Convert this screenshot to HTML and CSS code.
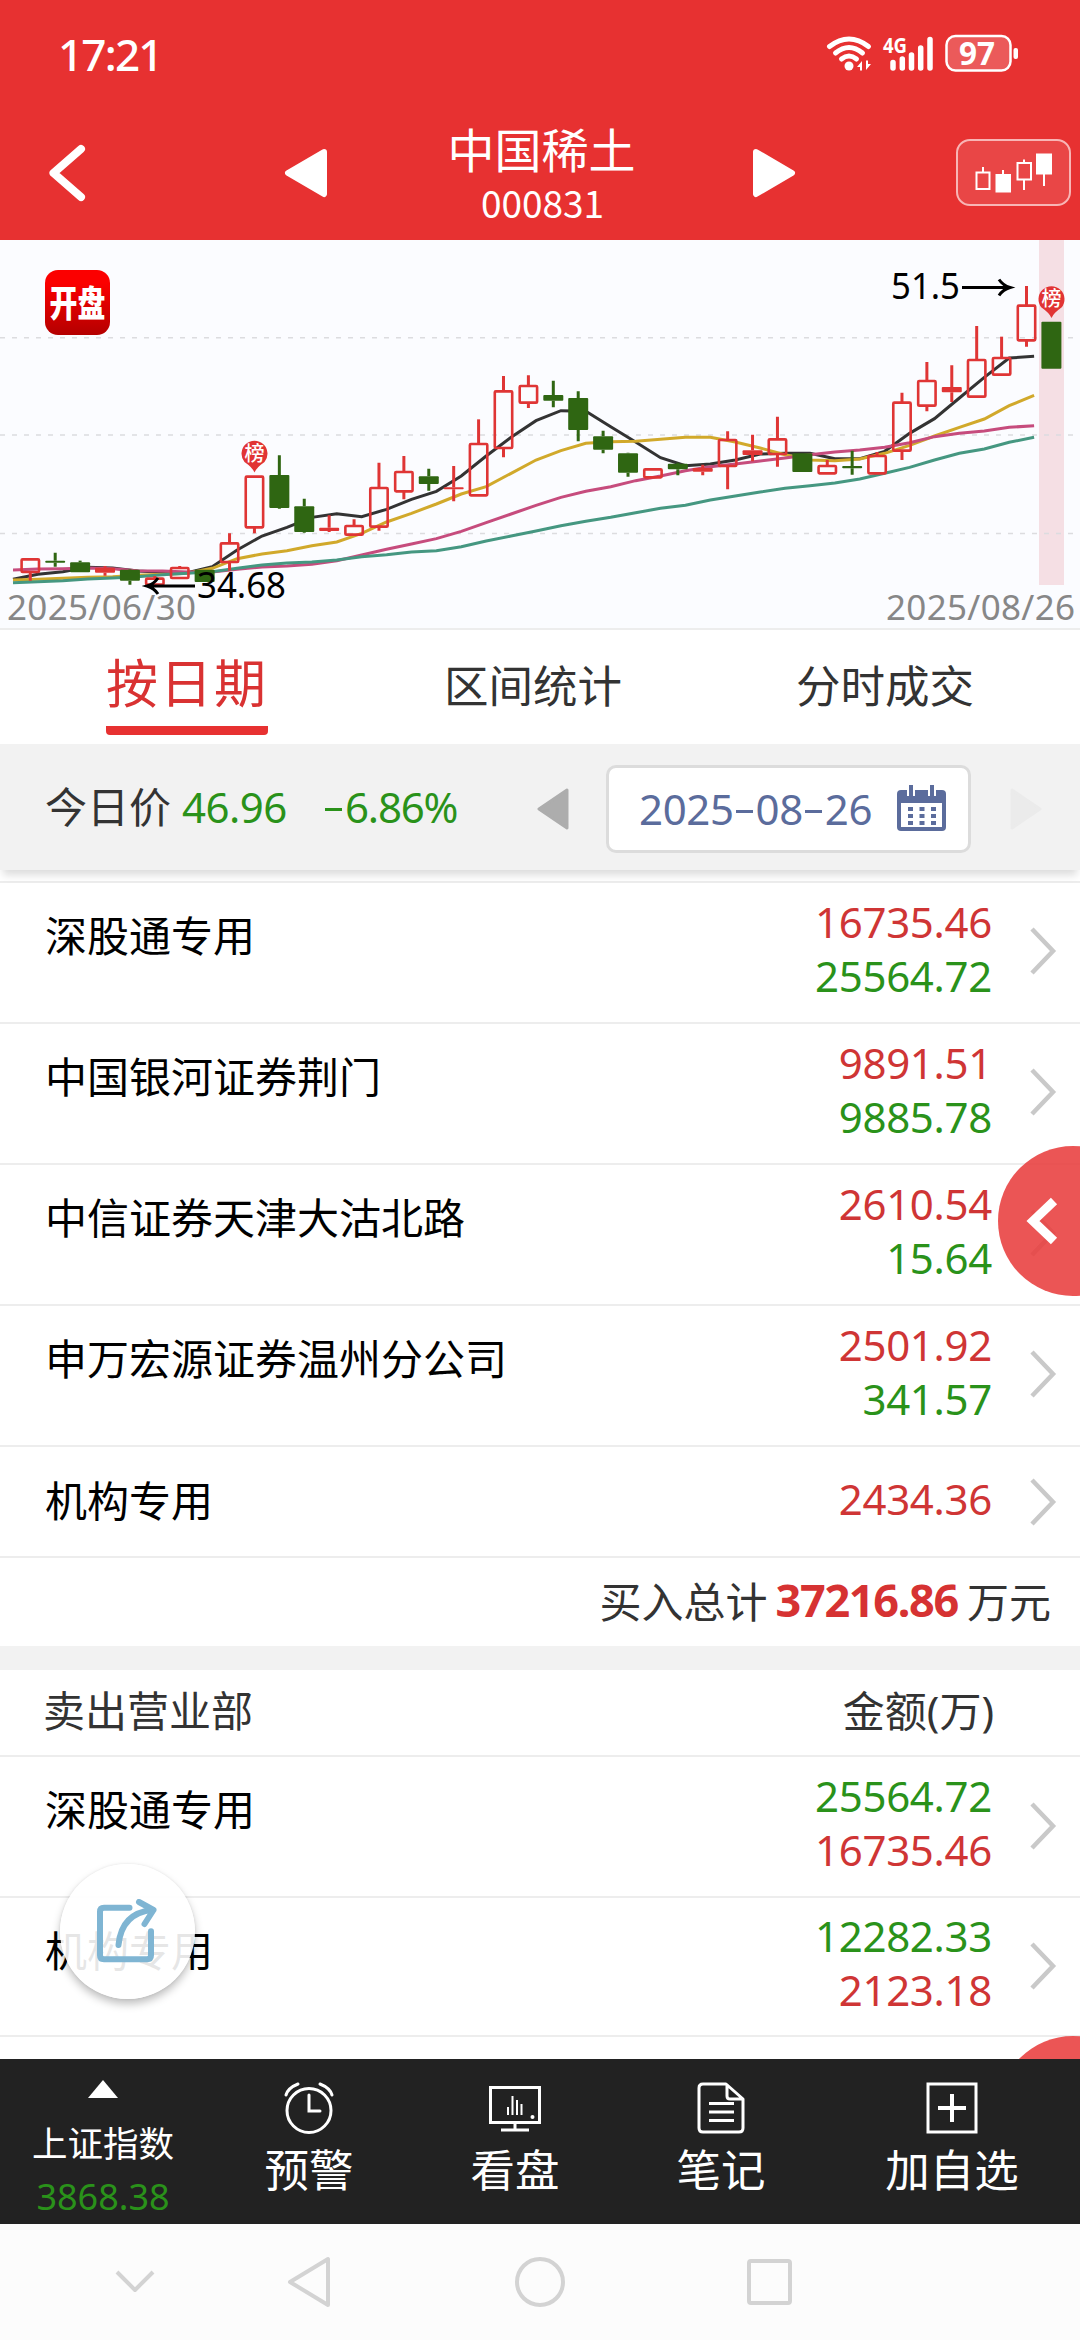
FILE: index.html
```html
<!DOCTYPE html>
<html lang="zh-CN">
<head>
    <meta charset="UTF-8">
    <meta name="viewport" content="width=device-width, initial-scale=1.0">
    <title>中国稀土 000831</title>
    <link rel="stylesheet" href="styles.css">
</head>
<body>
    <div class="app">
        <div class="status-bar">
            <span class="clock">17:21</span>
            <svg class="status-icons" width="200" height="68" viewBox="820 20 200 68">
                <g fill="none" stroke="#fff" stroke-width="5" stroke-linecap="round">
                    <path d="M829.5 46.500Q849 31.500 868.500 46.500"/>
                    <path d="M835.500 53Q849 42 862.500 53"/>
                    <path d="M841.500 59Q849 53 856.500 59"/>
                </g>
                <circle cx="849" cy="66" r="4.500" fill="#fff"/>
                <path d="M857 67l5-6v9.500h-2v-3.500zM871 64l-5 6v-9.500h2v3.500z" fill="#fff"/>
                <text class="net" x="883" y="53" textLength="24" lengthAdjust="spacingAndGlyphs">4G</text>
                <g stroke="#fff" stroke-width="5.500" stroke-linecap="round">
                    <path d="M893 62.500v5.500M902.300 59v9M911.500 55v13M920.700 48v20M930 39.500v28.500"/>
                </g>
                <rect x="946.500" y="36" width="64" height="34.500" rx="9" fill="rgba(255,255,255,0.2)" stroke="#fff" stroke-width="2.500"/>
                <rect x="1013.500" y="48" width="4.500" height="11" rx="2" fill="#fff"/>
                <text class="battery" x="959" y="64.500" textLength="36" lengthAdjust="spacingAndGlyphs">97</text>
            </svg>
        </div>

        <div class="header">
            <svg class="back" width="46" height="66" viewBox="0 0 46 66">
                <path d="M38 9L10.500 33L38 57" fill="none" stroke="#fff" stroke-width="8" stroke-linecap="round" stroke-linejoin="round"/>
            </svg>
            <svg class="prev" width="44" height="50" viewBox="0 0 44 50">
                <path d="M40 4L4 25L40 46z" fill="#fff" stroke="#fff" stroke-width="6" stroke-linejoin="round"/>
            </svg>
            <div class="title">
                <div class="stock-name">中国稀土</div>
                <div class="stock-code">000831</div>
            </div>
            <svg class="next" width="44" height="50" viewBox="0 0 44 50">
                <path d="M4 4L40 25L4 46z" fill="#fff" stroke="#fff" stroke-width="6" stroke-linejoin="round"/>
            </svg>
            <div class="kline-btn">
                <svg width="80" height="42" viewBox="973 151 80 42">
                    <g fill="none" stroke="#fff" stroke-width="2">
                        <path d="M975.500 171.500h13v16.500h-13zM982 166v5M1002 169v5M1016.500 162h13.500v16.500h-13.500zM1023 158.500v3.500M1023 179v10M1043 173v12"/>
                    </g>
                    <path d="M994.500 173h15.500v18.500h-15.500zM1035 152.500h16v21h-16z" fill="#fff"/>
                </svg>
            </div>
        </div>

        <div class="chart">
            <svg id="kline" width="1080" height="389" viewBox="0 240 1080 389">
                <defs>
                    <linearGradient id="logoBg" x1="0" y1="0" x2="0" y2="1">
                        <stop offset="0.200" stop-color="#fb0000"/>
                        <stop offset="1" stop-color="#b40000"/>
                    </linearGradient>
                </defs>
                <rect x="1039" y="240" width="25" height="345" fill="#f5dfe4"/>
                <path d="M0 337.700h1080M0 435h1080M0 533.500h1080" stroke="#dcdcdf" stroke-width="1.500" stroke-dasharray="5 7"/>
                <g id="averages"></g>
                <g id="candles"></g>
                <g id="pins"></g>
                <rect x="45" y="270" width="65" height="65" rx="13" fill="url(#logoBg)"/>
                <text class="logo-text" transform="translate(77.500 317) scale(0.930 1.200)" text-anchor="middle">开盘</text>
                <path d="M147 586h48M158 578q-4 6-11 8q7 2 11 8" class="arrow"/>
                <text class="extreme" x="197" y="598" textLength="89" lengthAdjust="spacingAndGlyphs">34.68</text>
                <path d="M962 287.500h48M999 279.500q4 6 11 8q-7 2-11 8" class="arrow"/>
                <text class="extreme" x="891" y="299" textLength="69" lengthAdjust="spacingAndGlyphs">51.5</text>
                <text class="day" x="7" y="620" textLength="189">2025/06/30</text>
                <text class="day" x="886" y="620" textLength="189">2025/08/26</text>
            </svg>
        </div>

        <div class="tabs">
            <div class="tab active">按日期</div>
            <div class="tab">区间统计</div>
            <div class="tab">分时成交</div>
        </div>

        <div class="toolbar">
            <span class="label">今日价</span>
            <span class="price">46.96</span>
            <span class="change"><i class="minus"></i>6.86%</span>
            <svg class="day-prev" width="32" height="42" viewBox="0 0 32 42">
                <path d="M30 2L2 21L30 40z" fill="#adadad" stroke="#adadad" stroke-width="3" stroke-linejoin="round"/>
            </svg>
            <div class="date-box">
                <span>2025<i class="dash"></i>08<i class="dash"></i>26</span>
                <svg width="49" height="46" viewBox="0 0 49 46">
                    <path d="M4 5h41q4 0 4 4v33q0 4-4 4h-41q-4 0-4-4v-33q0-4 4-4z" fill="#5b6c9c"/>
                    <path d="M4 18h41v24h-41z" fill="#fff"/>
                    <path d="M14 0v11M35 0v11" stroke="#fff" stroke-width="8"/>
                    <path d="M14 0v11M35 0v11" stroke="#5b6c9c" stroke-width="4"/>
                    <path d="M11 24h28M11 31h28M11 38h28" stroke="#5b6c9c" stroke-width="4" stroke-dasharray="5 6.500"/>
                </svg>
            </div>
            <svg class="day-next" width="32" height="42" viewBox="0 0 32 42">
                <path d="M2 2L30 21L2 40z" fill="#ebebeb" stroke="#ebebeb" stroke-width="3" stroke-linejoin="round"/>
            </svg>
        </div>

        <div class="content">
            <div class="list" id="buyList"></div>
            <div class="total">买入总计<b>37216.86</b>万元</div>
            <div class="list-head"><span>卖出营业部</span><span>金额(万)</span></div>
            <div class="list" id="sellList"></div>

            <div class="drawer-handle">
                <svg width="34" height="50" viewBox="0 0 34 50"><path d="M29 5L8 25L29 45" fill="none" stroke="#fff" stroke-width="9"/></svg>
            </div>
            <div class="drawer-handle lower"></div>

            <div class="share">
                <svg width="66" height="66" viewBox="96 1900 66 66">
                    <g fill="none" stroke="#7fb5d3" stroke-width="6" stroke-linecap="round" stroke-linejoin="round">
                        <path d="M130.500 1908.700h-25.500q-4 0-4 4v43.500q0 4 4 4h43q4 0 4-4v-24"/>
                        <path d="M119.500 1946q3-32 34-35"/>
                        <path d="M140 1903l14.500 8l-9 14"/>
                    </g>
                </svg>
            </div>
        </div>

        <div class="tab-bar">
            <div class="index">
                <i class="up"></i>
                <span class="index-name">上证指数</span>
                <span class="index-value">3868.38</span>
            </div>
            <div class="action">
                <svg width="52" height="52" viewBox="0 0 52 52" fill="none" stroke="#fff" stroke-width="3" stroke-linecap="round">
                    <circle cx="26" cy="28.500" r="22"/>
                    <path d="M26 13v16h11M3 13q2-7 12-11M49 13q-2-7-12-11"/>
                </svg>
                <span>预警</span>
            </div>
            <div class="action">
                <svg width="52" height="52" viewBox="0 0 52 52" fill="none" stroke="#fff">
                    <path d="M1.500 5.500h49v35h-49z" stroke-width="3"/>
                    <path d="M26 41v6M12 48h28" stroke-width="3"/>
                    <path d="M19 25v8M23.500 14v19M28 18v15M32.500 22v11" stroke-width="2"/>
                    <circle cx="43.500" cy="35" r="2" fill="#fff" stroke="none"/>
                </svg>
                <span>看盘</span>
            </div>
            <div class="action">
                <svg width="52" height="52" viewBox="0 0 52 52" fill="none" stroke="#fff" stroke-width="3" stroke-linejoin="round">
                    <path d="M8 2h23l17 15v29q0 4-4 4h-36q-4 0-4-4v-40q0-4 4-4zM32 2v12q0 3 3 3h13M14 21.500h25M14 30h25M14 38.500h25"/>
                </svg>
                <span>笔记</span>
            </div>
            <div class="action wide">
                <svg width="52" height="52" viewBox="0 0 52 52" fill="none" stroke="#fff">
                    <path d="M2 2h48v48h-48z" stroke-width="3"/>
                    <path d="M26 12v28M12 26h28" stroke-width="4"/>
                </svg>
                <span>加自选</span>
            </div>
        </div>

        <div class="system-nav">
            <svg width="42" height="26" viewBox="0 0 42 26"><path d="M3 3L21 21L39 3"/></svg>
            <svg width="46" height="54" viewBox="0 0 46 54"><path d="M42 4V50L4 27z"/></svg>
            <svg width="52" height="52" viewBox="0 0 52 52"><circle cx="26" cy="26" r="23"/></svg>
            <svg width="48" height="50" viewBox="0 0 48 50"><rect x="4" y="4" width="41" height="42" rx="2"/></svg>
        </div>
    </div>

    <script>
        const SVG_NS = 'http://www.w3.org/2000/svg';
        const STEP = 24.905;

        // [type, high, top, bottom, low], in thirds of a pixel. r = hollow up, f = filled up, g = down
        const candles = [
            ['r', 955, 958, 996, 1022], ['g', 938, 962, 968, 980], ['g', 962, 967, 997, 997],
            ['f', 978, 983, 998, 1007], ['g', 988, 989, 1022, 1034], ['r', 1008, 1016, 1034, 1036],
            ['r', 978, 984, 1014, 1014], ['g', 989, 989, 1026, 1026], ['r', 880, 910, 966, 992],
            ['r', 710, 710, 862, 880], ['g', 646, 705, 804, 806], ['g', 776, 799, 876, 878],
            ['f', 826, 863, 873, 876], ['r', 838, 858, 884, 888], ['r', 668, 744, 860, 872],
            ['r', 648, 696, 754, 778], ['g', 686, 709, 732, 752], ['f', 678, 742, 748, 784],
            ['r', 538, 612, 766, 766], ['r', 408, 454, 624, 652], ['r', 406, 438, 488, 504],
            ['g', 422, 465, 482, 502], ['g', 454, 474, 570, 604], ['g', 572, 589, 629, 640],
            ['g', 638, 640, 698, 710], ['r', 684, 688, 712, 712], ['g', 668, 671, 688, 706],
            ['f', 674, 684, 695, 706], ['r', 574, 600, 678, 748], ['f', 584, 631, 645, 664],
            ['r', 530, 598, 642, 680], ['g', 640, 640, 696, 696], ['r', 660, 678, 700, 700],
            ['g', 632, 678, 685, 704], ['r', 636, 648, 700, 700], ['r', 458, 488, 632, 660],
            ['r', 366, 423, 497, 514], ['f', 376, 441, 457, 486], ['r', 258, 360, 470, 474],
            ['r', 290, 354, 404, 404], ['r', 138, 197, 301, 320], ['g', 245, 245, 386, 386]
        ];

        const averages = {
            '#333333': [1018, 1003, 995, 982, 984, 993, 997, 998, 980, 930, 888, 862, 832, 821, 830, 808, 778, 754, 708, 648, 592, 542, 512, 514, 560, 606, 653, 677, 672, 660, 642, 640, 640, 656, 656, 634, 580, 536, 474, 412, 354, 349],
            '#d1a92b': [1020, 1018, 1015, 1012, 1010, 1006, 1003, 1000, 985, 956, 942, 932, 917, 906, 880, 846, 820, 792, 762, 740, 700, 660, 632, 610, 605, 604, 598, 592, 592, 606, 624, 644, 660, 662, 657, 640, 616, 588, 562, 537, 497, 466],
            '#c64c7d': [990, 987, 986, 984, 986, 992, 993, 996, 996, 988, 981, 978, 973, 962, 945, 928, 912, 896, 874, 848, 822, 796, 772, 754, 740, 722, 708, 692, 680, 672, 663, 654, 644, 636, 630, 622, 608, 590, 580, 573, 562, 557],
            '#459781': [1028, 1025, 1022, 1017, 1014, 1010, 1004, 1000, 995, 985, 975, 969, 966, 960, 950, 944, 936, 932, 920, 903, 888, 873, 857, 844, 832, 818, 805, 796, 780, 768, 756, 745, 737, 729, 717, 700, 682, 660, 640, 627, 607, 592]
        };

        const buys = [
            ['深股通专用', '16735.46', '25564.72'],
            ['中国银河证券荆门', '9891.51', '9885.78'],
            ['中信证券天津大沽北路', '2610.54', '15.64'],
            ['申万宏源证券温州分公司', '2501.92', '341.57'],
            ['机构专用', '2434.36']
        ];
        const sells = [
            ['深股通专用', '25564.72', '16735.46'],
            ['机构专用', '12282.33', '2123.18']
        ];

        const toY = v => 240 + v / 3;

        function add(parent, tag, attrs) {
            const el = document.createElementNS(SVG_NS, tag);
            for (const key in attrs) el.setAttribute(key, attrs[key]);
            document.getElementById(parent).appendChild(el);
            return el;
        }

        for (const color in averages) {
            const points = averages[color].map((v, i) => `${13 + i * STEP},${toY(v)}`).join(' ');
            add('averages', 'polyline', { points, fill: 'none', stroke: color, 'stroke-width': 3 });
        }

        candles.forEach(([type, high, top, bottom, low], i) => {
            const x = 30.3 + i * STEP;
            const color = type === 'g' ? '#2f6612' : '#df3535';
            const hollow = type === 'r';
            add('candles', 'path', {
                d: `M${x} ${toY(high)}V${toY(top)}M${x} ${toY(bottom)}V${toY(low)}`,
                stroke: color, 'stroke-width': 3
            });
            add('candles', 'rect', {
                x: x - (hollow ? 8.7 : 10), y: toY(top),
                width: hollow ? 17.4 : 20, height: (bottom - top) / 3,
                rx: 1, fill: hollow ? 'none' : color,
                stroke: hollow ? color : 'none', 'stroke-width': 2.6
            });
        });

        [[254.5, 453.5], [1051.5, 299]].forEach(([x, y]) => {
            add('pins', 'path', {
                d: `M${x - 10} ${y + 8.500}A13 13 0 1 1 ${x + 10} ${y + 8.500}Q${x + 2} ${y + 14} ${x} ${y + 19}Q${x - 2} ${y + 14} ${x - 10} ${y + 8.500}z`,
                fill: '#e13434'
            });
            add('pins', 'text', { x, y: y + 7, 'text-anchor': 'middle', class: 'pin-text' }).textContent = '榜';
        });

        function renderList(id, rows, colors) {
            document.getElementById(id).innerHTML = rows.map(([name, ...amounts]) => `
                <div class="row">
                    <span class="name">${name}</span>
                    <span class="amounts">${amounts.map((a, i) => `<span class="${colors[i]}">${a}</span>`).join('')}</span>
                    <svg class="more" width="28" height="48" viewBox="0 0 28 48"><path d="M3 2L24 24L3 46" fill="none" stroke="#c9c9c9" stroke-width="4.500"/></svg>
                </div>`).join('');
        }

        renderList('buyList', buys, ['red', 'green']);
        renderList('sellList', sells, ['green', 'red']);
    </script>
</body>
</html>
```
FILE: styles.css
```css
:root {
    --brand: #e73131;
    --red: #cf3535;
    --green: #2a921a;
    --text: #333;
    --line: #ededed;
    --gray-bg: #f2f2f2;
}

* {
    margin: 0;
    padding: 0;
    box-sizing: border-box;
}

body {
    width: 1080px;
    font-family: "Noto Sans", "Noto Sans CJK SC", sans-serif;
    color: var(--text);
    background: #fff;
}

svg {
    display: block;
    flex: none;
}

.app {
    display: flex;
    flex-direction: column;
    height: 2340px;
    overflow: hidden;
}

/* status bar */
.status-bar {
    display: flex;
    justify-content: space-between;
    align-items: center;
    height: 108px;
    padding: 0 60px 0 58px;
    background: var(--brand);
    color: #fff;
}

.clock {
    font-size: 44px;
    font-weight: 500;
    letter-spacing: -1.800px;
    line-height: 60px;
}

.net {
    font-size: 22px;
    font-weight: 700;
    fill: #fff;
}

.battery {
    font-size: 32px;
    font-weight: 700;
    fill: #fff;
}

/* header */
.header {
    display: flex;
    align-items: center;
    height: 132px;
    padding: 0 9px 3px 43px;
    background: var(--brand);
    color: #fff;
}

.prev {
    margin-left: 195px;
}

.title {
    width: 424px;
    padding: 3px 0 0 3px;
    text-align: center;
}

.stock-name {
    font-size: 47px;
    line-height: 56px;
}

.stock-code {
    padding-left: 2px;
    font-family: "Noto Sans CJK SC", sans-serif;
    font-size: 37px;
    line-height: 48px;
}

.kline-btn {
    display: flex;
    align-items: center;
    justify-content: center;
    width: 115px;
    height: 67px;
    margin-left: auto;
    border: 2px solid #f8b5b5;
    border-radius: 14px;
    background: rgba(255, 255, 255, 0.1);
}

/* chart */
.chart {
    height: 390px;
    background: #fbfcff;
    border-bottom: 2px solid var(--line);
}

.arrow {
    fill: none;
    stroke: #000;
    stroke-width: 3;
}

.extreme {
    font-size: 36px;
    fill: #000;
}

.day {
    font-size: 35px;
    fill: #878787;
}

.logo-text {
    font-size: 30px;
    font-weight: 900;
    fill: #fff;
}

.pin-text {
    font-size: 20px;
    font-weight: 500;
    fill: #fff;
}

/* tabs */
.tabs {
    display: grid;
    grid-template-columns: 350px 342px 362px;
    height: 114px;
    padding-left: 12px;
    justify-items: center;
    background: #fff;
}

.tab {
    padding-top: 24px;
    font-size: 44.500px;
    line-height: 64px;
}

.tab.active {
    height: 105px;
    padding-top: 21px;
    color: #d93232;
    font-size: 52px;
    letter-spacing: 2px;
    border-bottom: 9px solid var(--brand);
    border-radius: 0 0 4px 4px;
}

/* price and date */
.toolbar {
    position: relative;
    z-index: 1;
    display: flex;
    align-items: center;
    height: 126px;
    padding: 4px 38px 0 45px;
    background: var(--gray-bg);
    box-shadow: 0 8px 8px -3px rgba(0, 0, 0, 0.14);
    font-size: 42px;
}

.label,
.price,
.change {
    line-height: 60px;
    padding-bottom: 4px;
}

.price,
.change {
    color: var(--green);
}

.price {
    width: 140px;
    margin-left: 11px;
    letter-spacing: -0.5px;
}

.change {
    width: 136px;
    margin-left: 1px;
    white-space: nowrap;
    letter-spacing: -1.200px;
}

.minus,
.dash {
    display: inline-block;
    width: 17px;
    height: 3px;
    margin: 0 3px 12px 2px;
    background: currentColor;
}

.day-prev {
    margin-left: 78px;
}

.date-box {
    display: flex;
    align-items: center;
    justify-content: space-between;
    width: 365px;
    height: 88px;
    margin-left: 37px;
    padding: 0 22px 2px 30px;
    background: #fff;
    border: 3px solid #dcdcdc;
    border-radius: 10px;
    color: #5b6c9c;
    letter-spacing: -0.400px;
    white-space: nowrap;
}

.day-next {
    margin-left: auto;
}

/* broker lists */
.content {
    position: relative;
    flex: 1;
    padding-top: 10.500px;
    overflow: hidden;
    background: #fff;
}

.row {
    display: flex;
    align-items: center;
    padding: 15px 23px 17.800px 45px;
    border-top: 2px solid var(--line);
    font-size: 42px;
    line-height: 54px;
    height: 141px;
}

.name {
    flex: 1;
    align-self: flex-start;
    padding-top: 11px;
    color: #000;
}

.amounts {
    display: flex;
    flex-direction: column;
    align-items: flex-end;
    margin: -3px 37px 1px 0;
    letter-spacing: -0.300px;
}

.row:last-child {
    border-bottom: 2px solid var(--line);
}

#buyList .row:last-child {
    align-items: center;
    height: 113.500px;
    padding: 0 23px 0 45px;
}

#buyList .row:last-child .name {
    align-self: center;
    padding-top: 0;
}

.red {
    color: var(--red);
}

.green {
    color: var(--green);
}

.more {
    margin-top: 1px;
}

.total {
    display: flex;
    justify-content: flex-end;
    align-items: center;
    height: 88px;
    padding: 0 29px 5px 0;
    font-size: 42px;
}

.total b {
    margin: 0 9px 0 8px;
    color: #d63232;
    font-size: 45px;
    letter-spacing: -1.300px;
}

.list-head {
    display: flex;
    justify-content: space-between;
    align-items: center;
    height: 109px;
    padding: 0 86px 9px 43px;
    border-top: 24px solid var(--gray-bg);
    font-size: 42px;
}

.drawer-handle {
    position: absolute;
    top: 276px;
    left: 998px;
    display: flex;
    align-items: center;
    width: 150px;
    height: 150px;
    padding-left: 27px;
    border-radius: 50%;
    background: rgba(232, 62, 62, 0.880);
}

.drawer-handle.lower {
    top: 1166px;
}

.share {
    position: absolute;
    top: 994px;
    left: 60px;
    display: flex;
    align-items: center;
    justify-content: center;
    width: 135px;
    height: 135px;
    border-radius: 50%;
    background: rgba(255, 255, 255, 0.900);
    box-shadow: 0 5px 9px rgba(0, 0, 0, 0.250), 0 0 3px rgba(0, 0, 0, 0.080);
}

/* bottom bar */
.tab-bar {
    display: flex;
    height: 165px;
    background: #222;
    color: #fff;
}

.index,
.action {
    display: flex;
    flex-direction: column;
    align-items: center;
    width: 206px;
}

.index {
    padding-top: 21px;
}

.up {
    border: 15px solid transparent;
    border-top: 0;
    border-bottom: 18px solid #fff;
}

.index-name {
    margin-top: 19px;
    font-size: 35.500px;
    line-height: 52px;
}

.index-value {
    color: var(--green);
    font-size: 36px;
    line-height: 56px;
}

.action {
    padding-top: 23px;
    font-size: 44.500px;
    line-height: 60px;
}

.action span {
    margin-top: 6px;
}

.action.wide {
    width: 256px;
}

.system-nav {
    display: grid;
    grid-template-columns: 269px 80px 382px 76px;
    justify-items: center;
    align-items: center;
    height: 116px;
    background: #fcfcfc;
}

.system-nav svg {
    fill: none;
    stroke: #d3d3d3;
    stroke-width: 4;
    stroke-linejoin: round;
}
```
